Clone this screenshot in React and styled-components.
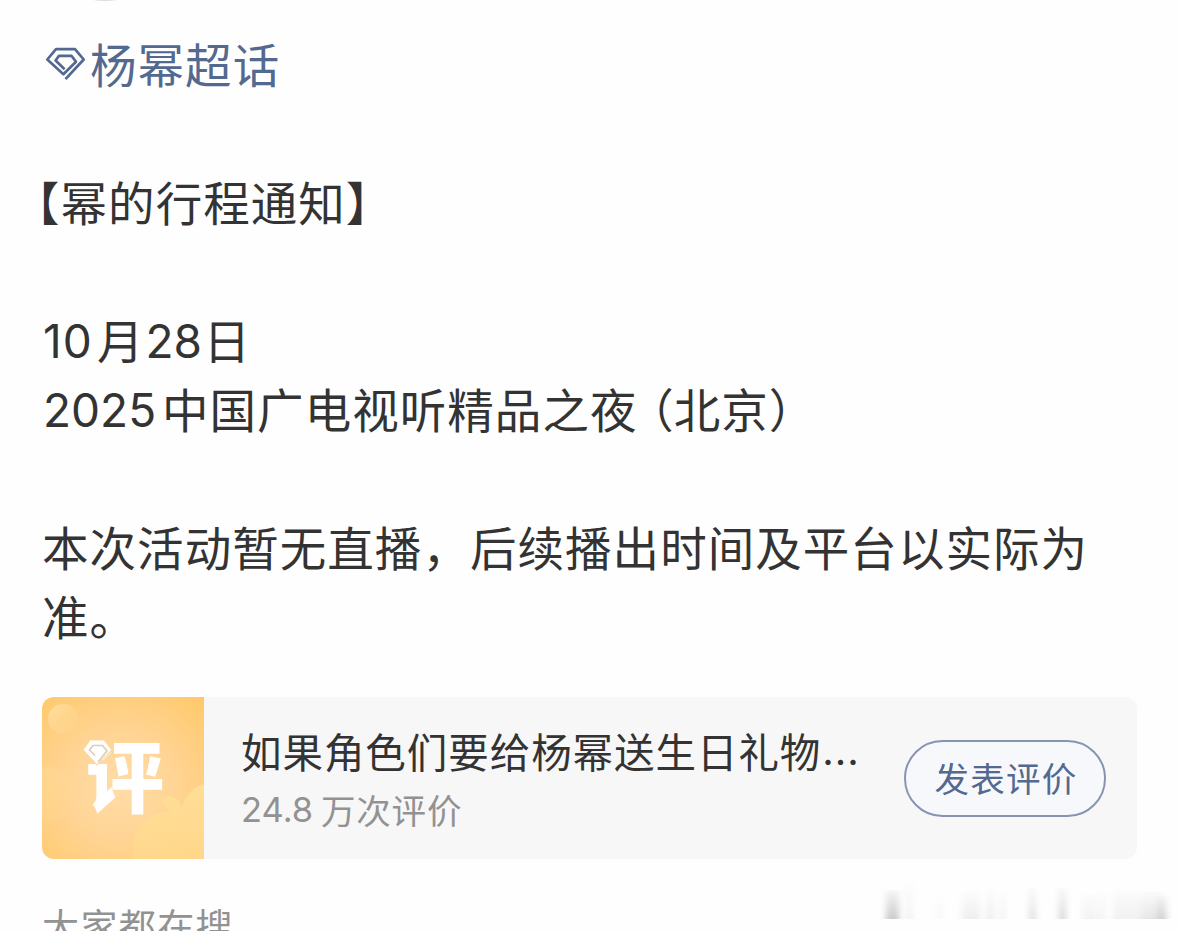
import React from "react";
import styled, { createGlobalStyle } from "styled-components";

const GlobalStyle = createGlobalStyle`
  * { box-sizing: border-box; }
  body {
    margin: 0;
    background: #fff;
    overflow: hidden;
    font-family: Inter, "Noto Sans CJK SC", sans-serif;
  }
`;

const Page = styled.main`
  position: relative;
  width: 1179px;
  height: 931px;
  overflow: hidden;
  background: #fefefe;
  padding: 28px 42px 0;
`;

const AvatarEdge = styled.div`
  position: absolute;
  top: -6px;
  left: 88px;
  width: 34px;
  height: 7px;
  border-radius: 50%;
  background: #dedede;
`;

const Post = styled.article`
  height: 669px;
  color: #333;
`;

const Line = styled.p`
  display: flex;
  align-items: center;
  margin: 0 0 ${(p) => (p.$gap ? 69 : 0)}px ${(p) => p.$outdent || 0}px;
  height: 69px;
  font-size: 46.5px;
  line-height: 69px;
  letter-spacing: 1.05px;
  white-space: nowrap;
`;

const TopicLink = styled(Line)`
  color: #53698f;
`;

const Run = styled.span`
  font-family: "Noto Sans CJK SC", sans-serif;
`;

const OpenParen = styled(Run)`
  margin-left: 13px;
  letter-spacing: 0;
  font-feature-settings: "halt" 1;
`;

const Digits = styled.span`
  font-family: Inter, sans-serif;
  font-size: ${(p) => p.$size || 46}px;
  letter-spacing: ${(p) => p.$track || 0}px;
  width: ${(p) => p.$width}px;
  padding-left: ${(p) => p.$indent || 0}px;
  padding-top: ${(p) => p.$drop || 0}px;
`;

const TopicIcon = styled.svg`
  width: 42px;
  height: 36px;
  margin: 1px 3px 0 3px;
  flex: none;
`;

const Card = styled.section`
  display: flex;
  align-items: center;
  width: 1095px;
  height: 162px;
  border-radius: 12px;
  overflow: hidden;
  background: #f7f7f7;
`;

const Cover = styled.div`
  flex: none;
  width: 162px;
  height: 162px;
  overflow: hidden;
  background: radial-gradient(circle at 48% 55%, #ffdca8 0%, #ffd596 42%, #ffc869 100%);
`;

const CoverArt = styled.svg`
  display: block;
  width: 162px;
  height: 162px;
`;

const CardBody = styled.div`
  width: 662px;
  padding-left: 37px;
  height: 162px;
  padding-top: 26px;
`;

const CardTitle = styled.div`
  display: flex;
  height: 56px;
  font-size: 40.5px;
  line-height: 56px;
  letter-spacing: 0.95px;
  color: #333;
  white-space: nowrap;
`;

const CardMeta = styled.div`
  display: flex;
  height: 60px;
  font-size: 34.5px;
  line-height: 60px;
  letter-spacing: 0.8px;
  color: #929292;
  white-space: nowrap;
`;

const RateButton = styled.button`
  width: 202px;
  height: 77px;
  margin: 0 0 0 38px;
  padding: 0 0 1px 2px;
  border: 2px solid #8794b0;
  border-radius: 39px;
  background: #f7f8fc;
  color: #53698f;
  font: 34.5px/1 "Noto Sans CJK SC", sans-serif;
  letter-spacing: 1.2px;
  white-space: nowrap;
`;

const SearchHeading = styled.h2`
  margin: 38px 0 0;
  font: 400 37px/56px "Noto Sans CJK SC", sans-serif;
  letter-spacing: 1.4px;
  color: #929292;
`;

const Smudges = styled.svg`
  position: absolute;
  left: 870px;
  top: 876px;
  width: 309px;
  height: 50px;
`;

const smudges = [
  [16, 13, 0.24, 8], [36, 6, 0.06, 0], [66, 7, 0.03, 14], [92, 18, 0.07, 10],
  [117, 7, 0.08, 8], [130, 5, 0.06, 8], [159, 7, 0.13, 6], [189, 7, 0.18, 6],
  [212, 16, 0.05, 12], [230, 5, 0.06, 10], [243, 29, 0.06, 8], [272, 22, 0.11, 10],
  [288, 9, 0.14, 14],
];

function Gem() {
  return (
    <TopicIcon viewBox="0 0 42 36" fill="none" stroke="#53698f" strokeWidth="2.7" strokeLinejoin="round">
      <path d="M20.5 34.2 38.7 14.5 30 4.2H11L2.3 14.5 18.4 29.2 31 16.8 26.5 10.8H14L10.6 15.5 19.6 24.2" />
    </TopicIcon>
  );
}

export default function App() {
  return (
    <>
      <GlobalStyle />
      <Page>
        <AvatarEdge />
        <Post>
          <TopicLink $gap>
            <Gem />
            <Run>杨幂超话</Run>
          </TopicLink>
          <Line $gap $outdent={-29}>
            <Run>【幂的行程通知】</Run>
          </Line>
          <Line>
            <Digits $width={55} $indent={1} $track={1} $drop={6}>10</Digits>
            <Run>月</Run>
            <Digits $width={59} $indent={1} $drop={6}>28</Digits>
            <Run>日</Run>
          </Line>
          <Line $gap>
            <Digits $width={120} $indent={1} $drop={6}>2025</Digits>
            <Run>中国广电视听精品之夜</Run>
            <OpenParen>（</OpenParen>
            <Run>北京</Run>
            <Run>）</Run>
          </Line>
          <Line>
            <Run>本次活动暂无直播，后续播出时间及平台以实际为</Run>
          </Line>
          <Line>
            <Run>准。</Run>
          </Line>
        </Post>
        <Card>
          <Cover>
            <CoverArt viewBox="0 0 162 162">
              <defs>
                <linearGradient id="bubble" x1="0" y1="0" x2="1" y2="1">
                  <stop offset="0" stopColor="#ffe0a2" />
                  <stop offset="1" stopColor="#ffd58c" stopOpacity=".2" />
                </linearGradient>
                <linearGradient id="fruit" x1="0" y1="0" x2="0" y2="1">
                  <stop offset="0" stopColor="#ffdf98" />
                  <stop offset="1" stopColor="#ffd88c" />
                </linearGradient>
              </defs>
              <circle cx="21" cy="22" r="15" fill="url(#bubble)" />
              <circle cx="5" cy="98" r="28" fill="url(#bubble)" opacity=".5" />
              <path d="M91 162C88 132 106 113 132 115 119 111 119 103 122 99 132 98 139 103 139 112 145 95 153 89 162 87V162Z" fill="url(#fruit)" opacity=".9" />
              <text x="44" y="109.5" fontSize="78" fontWeight="900" fontFamily="Noto Sans CJK SC, sans-serif" fill="#fff">评</text>
              <path d="M48 43H62L70 53 55 68 41 53Z" fill="#fff" stroke="#ffd79a" strokeWidth="1.2" />
              <path d="M56 65 65 54 60.5 48.5H51L47.5 53 53 58.5" fill="none" stroke="#dfccb5" strokeWidth="1.7" />
            </CoverArt>
          </Cover>
          <CardBody>
            <CardTitle>
              <Run>如果角色们要给杨幂送生日礼物</Run>
              <Digits $size={40} $track={0.9} $indent={1}>...</Digits>
            </CardTitle>
            <CardMeta>
              <Digits $size={34.5} $width={80} $drop={1}>24.8</Digits>
              <Run>万次评价</Run>
            </CardMeta>
          </CardBody>
          <RateButton>发表评价</RateButton>
        </Card>
        <SearchHeading>大家都在搜</SearchHeading>
        <Smudges viewBox="0 0 309 50">
          <defs>
            <linearGradient id="fade" x1="0" y1="0" x2="0" y2="1">
              <stop offset="0" stopColor="#777" stopOpacity=".15" />
              <stop offset="1" stopColor="#777" />
            </linearGradient>
            <filter id="soft" x="-80%" y="-10%" width="260%" height="120%">
              <feGaussianBlur stdDeviation="3 0.6" />
            </filter>
          </defs>
          {smudges.map(([x, w, o, y]) => (
            <rect key={x} x={x} y={y + 6} width={w} height={37 - y} fill="url(#fade)" opacity={o * 1.6} filter="url(#soft)" />
          ))}
        </Smudges>
      </Page>
    </>
  );
}
